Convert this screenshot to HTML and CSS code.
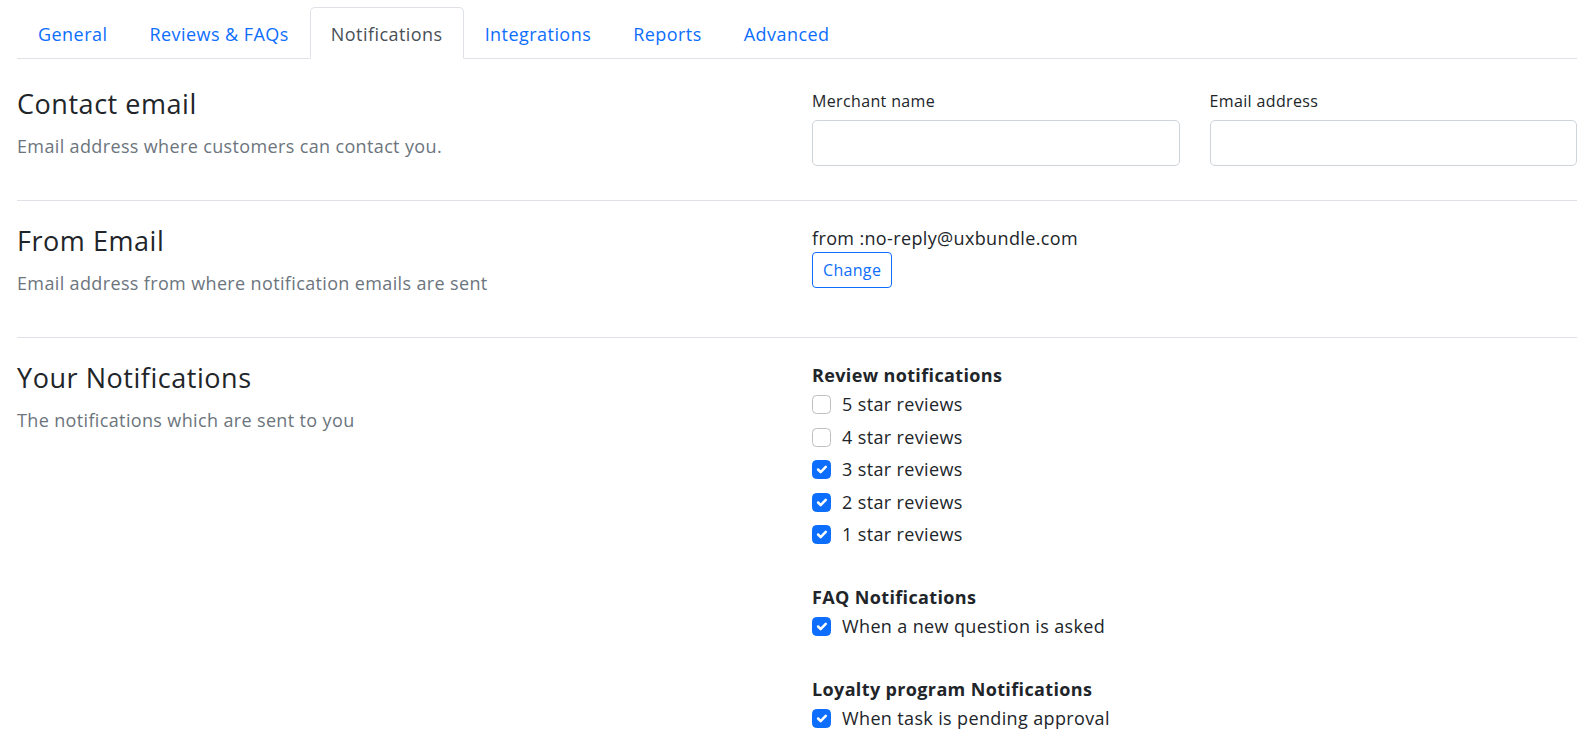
FILE: index.html
```html
<!DOCTYPE html>
<html lang="en">
<head>
<meta charset="utf-8">
<title>Notifications settings</title>
<link rel="stylesheet" href="styles.css">
</head>
<body>
<div class="page">
  <nav class="tabs">
    <a class="tab" href="#">General</a>
    <a class="tab" href="#">Reviews &amp; FAQs</a>
    <a class="tab active" href="#">Notifications</a>
    <a class="tab" href="#">Integrations</a>
    <a class="tab" href="#">Reports</a>
    <a class="tab" href="#">Advanced</a>
  </nav>

  <section class="section first">
    <div class="intro">
      <h2 class="title">Contact email</h2>
      <p class="desc">Email address where customers can contact you.</p>
    </div>
    <div class="fields">
      <div class="field">
        <label class="field-label" for="merchant">Merchant name</label>
        <input class="input" id="merchant" type="text">
      </div>
      <div class="field">
        <label class="field-label" for="email">Email address</label>
        <input class="input" id="email" type="email">
      </div>
    </div>
  </section>

  <section class="section">
    <div class="intro">
      <h2 class="title">From Email</h2>
      <p class="desc">Email address from where notification emails are sent</p>
    </div>
    <div class="from">
      <div class="from-text">from :no-reply@uxbundle.com</div>
      <button class="btn" type="button">Change</button>
    </div>
  </section>

  <section class="section last">
    <div class="intro">
      <h2 class="title">Your Notifications</h2>
      <p class="desc">The notifications which are sent to you</p>
    </div>
    <div class="groups">
      <div class="group">
        <div class="group-title">Review notifications</div>
        <label class="check"><span class="box"></span>5 star reviews</label>
        <label class="check"><span class="box"></span>4 star reviews</label>
        <label class="check"><span class="box on"><svg viewBox="0 0 20 20"><path d="m6 10 3 3 6-6"/></svg></span>3 star reviews</label>
        <label class="check"><span class="box on"><svg viewBox="0 0 20 20"><path d="m6 10 3 3 6-6"/></svg></span>2 star reviews</label>
        <label class="check"><span class="box on"><svg viewBox="0 0 20 20"><path d="m6 10 3 3 6-6"/></svg></span>1 star reviews</label>
      </div>
      <div class="group">
        <div class="group-title">FAQ Notifications</div>
        <label class="check"><span class="box on"><svg viewBox="0 0 20 20"><path d="m6 10 3 3 6-6"/></svg></span>When a new question is asked</label>
      </div>
      <div class="group">
        <div class="group-title">Loyalty program Notifications</div>
        <label class="check"><span class="box on"><svg viewBox="0 0 20 20"><path d="m6 10 3 3 6-6"/></svg></span>When task is pending approval</label>
      </div>
    </div>
  </section>
</div>
</body>
</html>
```

FILE: styles.css
```css
* { box-sizing: border-box; }
html, body { margin: 0; background: #fff; }
body {
  font-family: "Open Sans", "Noto Sans", sans-serif;
  font-size: 18px;
  line-height: 27px;
  letter-spacing: 0.02em;
  color: #212529;
}
.page { padding: 7px 10px 0 17px; }

.tabs {
  display: flex;
  border-bottom: 1px solid #dee2e6;
}
.tab {
  display: block;
  padding: 13px 20px 10px;
  line-height: 27px;
  border: 1px solid transparent;
  border-top-left-radius: 5px;
  border-top-right-radius: 5px;
  margin-bottom: -1px;
  color: #0d6efd;
  text-decoration: none;
  letter-spacing: 0.025em;
}
.tab.active {
  color: #495057;
  background: #fff;
  border-color: #dee2e6 #dee2e6 #fff;
}

.section {
  display: grid;
  grid-template-columns: 1fr 1fr;
  column-gap: 30px;
  padding: 24px 0 35px;
  border-bottom: 1px solid #dee2e6;
}
.section.first { padding-top: 29px; padding-bottom: 34px; }
.section.last { border-bottom: none; }

.title {
  margin: 0;
  font-size: 27px;
  line-height: 32px;
  font-weight: 400;
  letter-spacing: 0.02em;
  color: #212529;
}
.desc {
  margin: 13px 0 5px;
  color: #6c757d;
}

.fields {
  display: grid;
  grid-template-columns: 1fr 1fr;
  column-gap: 30px;
}
.field-label {
  display: block;
  font-size: 16px;
  line-height: 24px;
  margin: 1px 0 7px;
}
.input {
  display: block;
  width: 100%;
  height: 46px;
  border: 1px solid #ced4da;
  border-radius: 5px;
  font: inherit;
  padding: 0 14px;
  background: #fff;
}

.from-text { line-height: 27px; }
.btn {
  display: block;
  font: inherit;
  font-size: 16px;
  line-height: 24px;
  letter-spacing: 0.02em;
  padding: 5px 10px;
  color: #0d6efd;
  background: #fff;
  border: 1px solid #0d6efd;
  border-radius: 4px;
  cursor: pointer;
}

.group + .group { margin-top: 36px; }
.group-title {
  font-weight: 700;
  margin-bottom: 2px;
}
.check {
  display: flex;
  align-items: center;
  height: 27px;
  margin-bottom: 5.5px;
}
.check:last-child { margin-bottom: 0; }
.box {
  flex: none;
  width: 19px;
  height: 19px;
  border: 1px solid #bcbfc2;
  border-radius: 4.5px;
  margin-right: 11px;
  display: flex;
  align-items: center;
  justify-content: center;
  background: #fff;
}
.box.on {
  background: #0d6efd;
  border-color: #0d6efd;
}
.box svg {
  width: 17px;
  height: 17px;
  fill: none;
  stroke: #fff;
  stroke-width: 3;
  stroke-linecap: round;
  stroke-linejoin: round;
}
```
